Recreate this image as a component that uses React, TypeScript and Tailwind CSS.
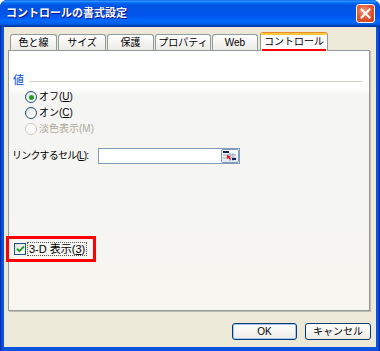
import React from "react";

function Radio({ checked, disabled }: { checked?: boolean; disabled?: boolean }) {
  return (
    <span
      className={
        "w-[12px] h-[12px] rounded-full border flex items-center justify-center shrink-0 " +
        (disabled
          ? "border-[#cac8bb] bg-white"
          : "border-[#1c5180] bg-[linear-gradient(135deg,#dcdbd5_0%,#ffffff_70%)]")
      }
    >
      {checked && <span className="w-[5px] h-[5px] rounded-full bg-[#21a121]" />}
    </span>
  );
}

function Tab({ label, w }: { label: string; w: string }) {
  return (
    <div
      className={
        "h-[16px] border border-b-0 border-[#919b9c] rounded-t-[3px] bg-[linear-gradient(to_bottom,#ffffff,#ecebe6)] flex items-center justify-center leading-none " +
        w
      }
    >
      {label}
    </div>
  );
}

export default function App() {
  return (
    <div className="w-[380px] h-[351px] bg-white font-['Liberation_Sans','Noto_Sans_CJK_JP',sans-serif] text-[10px] text-black">
      <div className="w-full h-full flex flex-col rounded-t-[7px] overflow-hidden bg-[linear-gradient(to_right,#001ea0_0px,#0855dd_2px,#0855dd_calc(100%-2px),#001ea0_100%)]">
        <div className="h-[27px] shrink-0 flex items-center justify-between pl-[6px] pr-[5px] bg-[linear-gradient(to_bottom,#0058ee_0%,#3593ff_4%,#288eff_6%,#127dff_8%,#036ffc_10%,#0262ee_14%,#0057e5_20%,#0054e3_24%,#0055eb_56%,#005bf5_66%,#026afe_76%,#0062ef_86%,#0052d6_92%,#0040ab_96%,#003092_100%)]">
          <span className="text-white font-bold text-[11px] leading-none [text-shadow:1px_1px_0_#0f1089]">
            コントロールの書式設定
          </span>
          <div className="w-[19px] h-[19px] rounded-[3px] border border-white bg-[radial-gradient(circle_at_40%_35%,#f39c83_0%,#e35b36_45%,#c9391a_100%)] flex items-center justify-center">
            <svg width="11" height="11" viewBox="0 0 11 11">
              <path d="M1.5 1.5 L9.5 9.5 M9.5 1.5 L1.5 9.5" stroke="white" strokeWidth="2" strokeLinecap="square" />
            </svg>
          </div>
        </div>
        <div className="flex-1 flex flex-col mx-[4px] mb-[4px] bg-[#ece9d8]">
          <div className="h-[23px] shrink-0 flex items-end pl-[6px] gap-[1px]">
            <Tab label="色と線" w="w-[47px]" />
            <Tab label="サイズ" w="w-[48px]" />
            <Tab label="保護" w="w-[47px]" />
            <Tab label="プロパティ" w="w-[56px]" />
            <Tab label="Web" w="w-[46px]" />
            <div className="relative z-10 ml-[1px] mb-[-1px] w-[68px] h-[19px] border border-b-0 border-[#919b9c] border-t-0 rounded-t-[3px] bg-[#fcfcfe] flex flex-col overflow-hidden">
              <div className="h-[1px] bg-[#e68b2c] shrink-0" />
              <div className="h-[2px] bg-[#ffc73c] shrink-0" />
              <div className="flex-1 flex items-center justify-center leading-none">コントロール</div>
              <div className="h-[2px] mx-[1px] bg-[#ff0000] shrink-0" />
            </div>
          </div>
          <div className="ml-[4px] mr-[6px] h-[261px] shrink-0 border border-[#919b9c] shadow-[1px_1px_0_#bfbdb1] bg-[linear-gradient(to_bottom,#ffffff_0%,#ffffff_14%,#f5f5f4_17%,#f5f5f3_60%,#f8f6f0_100%)] flex flex-col">
            <div className="mt-[22px] h-[14px] flex items-center pl-[4px]">
              <span className="text-[#0046d5] text-[11px] leading-none">値</span>
              <div className="flex-1 h-[1px] bg-[#d0d0bf] ml-[6px] mr-[7px] mt-[2px]" />
            </div>
            <div className="mt-[2px] flex flex-col pl-[16px]">
              <div className="h-[16px] flex items-center gap-[2px]">
                <Radio checked />
                <span className="leading-none">
                  オフ(<u>U</u>)
                </span>
              </div>
              <div className="h-[16px] flex items-center gap-[2px]">
                <Radio />
                <span className="leading-none">
                  オン(<u>C</u>)
                </span>
              </div>
              <div className="h-[16px] flex items-center gap-[2px] text-[#aca899]">
                <Radio disabled />
                <span className="leading-none">淡色表示(M)</span>
              </div>
            </div>
            <div className="mt-[11px] h-[16px] flex items-center pl-[3px]">
              <span className="w-[86px] leading-none whitespace-nowrap tracking-[-0.8px]">
                リンクするセル(<u>L</u>):
              </span>
              <div className="w-[142px] h-[16px] border border-[#7f9db9] bg-white flex justify-end">
                <div className="w-[18px] h-[14px] rounded-[2px] border border-[#7f9db9] bg-[linear-gradient(to_bottom,#ffffff,#e3e8f4)] flex items-center justify-center">
                  <svg width="14" height="10" viewBox="0 0 14 10">
                    <rect x="0" y="0" width="6" height="2" fill="#0a246a" />
                    <path d="M0 4 H13 M0 7 H13 M7 2 V10 M10 2 V10" stroke="#9aa6b8" strokeWidth="1" />
                    <rect x="9" y="7" width="4" height="2" fill="#0a246a" />
                    <path d="M4 4 L4 8 L5.3 6.7 L7 9 L8 8.3 L6.3 6 L8 6 Z" fill="#ff0000" />
                  </svg>
                </div>
              </div>
            </div>
            <div className="mt-[72px] ml-[-3px] w-[90px] h-[26px] border-[3px] border-[#ff0000] flex items-center pl-[5px]">
              <span className="w-[12px] h-[12px] border border-[#1c5180] bg-[linear-gradient(135deg,#dcdbd5_0%,#ffffff_70%)] flex items-center justify-center shrink-0">
                <svg width="9" height="8" viewBox="0 0 9 8">
                  <path d="M1 3.8 L3.4 6.2 L8 1.5" stroke="#21a121" strokeWidth="2" fill="none" />
                </svg>
              </span>
              <span className="ml-[1px] px-[1px] h-[14px] flex items-center border border-dotted border-[#555] leading-none text-[11px] whitespace-nowrap">
                3-D 表示(<u>3</u>)
              </span>
            </div>
          </div>
          <div className="mt-[12px] flex justify-end gap-[8px] pr-[5px]">
            <div className="w-[65px] h-[17px] rounded-[3px] border border-[#003c74] bg-[linear-gradient(to_bottom,#ffffff,#ecebe6)] shadow-[inset_0_0_0_1px_#a7c4f3] flex items-center justify-center leading-none">
              OK
            </div>
            <div className="w-[66px] h-[17px] rounded-[3px] border border-[#003c74] bg-[linear-gradient(to_bottom,#ffffff,#ecebe6)] flex items-center justify-center leading-none">
              キャンセル
            </div>
          </div>
        </div>
      </div>
    </div>
  );
}
